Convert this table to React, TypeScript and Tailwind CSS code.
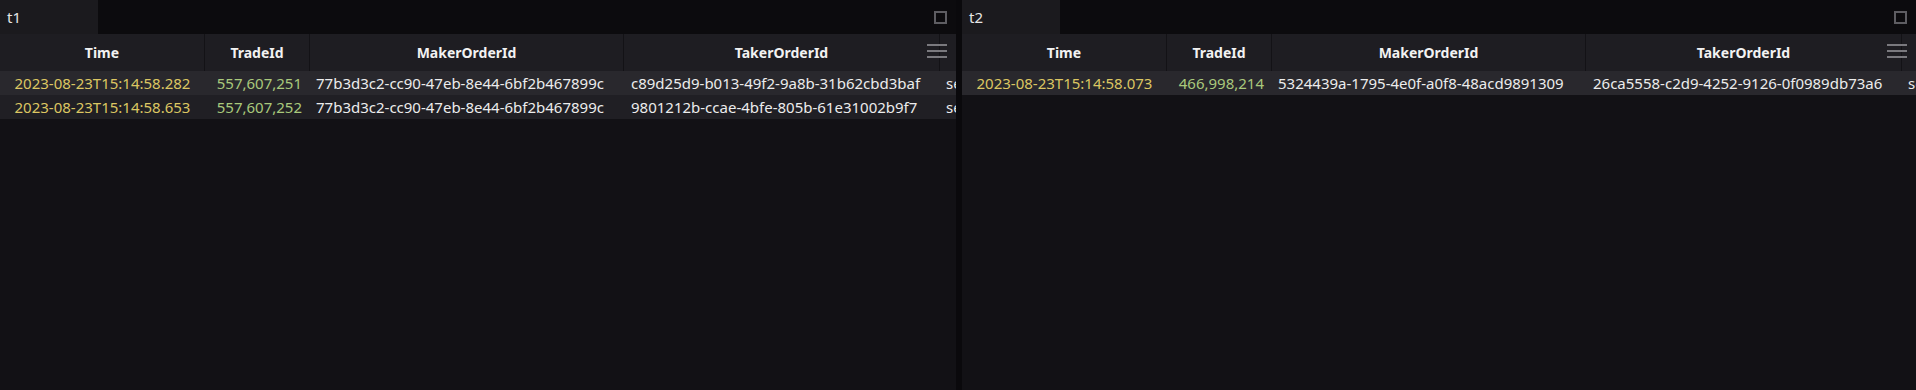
import React from 'react';

interface Trade {
  time: string;
  tradeId: string;
  maker: string;
  taker: string;
  side: string;
}

const cols = [
  { name: 'Time', w: 'w-[205px]' },
  { name: 'TradeId', w: 'w-[105px]' },
  { name: 'MakerOrderId', w: 'w-[314px]' },
  { name: 'TakerOrderId', w: 'w-[316px]' },
  { name: 'Side', w: 'w-[120px]' },
];

const left: Trade[] = [
  { time: '2023-08-23T15:14:58.282', tradeId: '557,607,251', maker: '77b3d3c2-cc90-47eb-8e44-6bf2b467899c', taker: 'c89d25d9-b013-49f2-9a8b-31b62cbd3baf', side: 'sell' },
  { time: '2023-08-23T15:14:58.653', tradeId: '557,607,252', maker: '77b3d3c2-cc90-47eb-8e44-6bf2b467899c', taker: '9801212b-ccae-4bfe-805b-61e31002b9f7', side: 'sell' },
];

const right: Trade[] = [
  { time: '2023-08-23T15:14:58.073', tradeId: '466,998,214', maker: '5324439a-1795-4e0f-a0f8-48acd9891309', taker: '26ca5558-c2d9-4252-9126-0f0989db73a6', side: 'sell' },
];

const Panel: React.FC<{ title: string; rows: Trade[]; width: string }> = ({ title, rows, width }) => {
  return (
    <div className={`${width} h-full flex flex-col bg-[#121115] overflow-hidden shrink-0`}>
      <div className="h-[34px] flex items-center bg-[#0c0b0e] shrink-0">
        <div className="h-full w-[98px] bg-[#1b1a1e] flex items-center pl-[7px] text-[15px] text-[#e6e6e6]">{title}</div>
        <div className="flex-1" />
        <div className="w-[13px] h-[13px] border-2 border-[#5e5d62] mr-[9px]" />
      </div>
      <div className="relative flex-1 overflow-hidden">
        <div className="w-max">
          <div className="flex h-[37px] bg-[#1e1d22]">
            {cols.map((c, i) => (
              <div key={c.name} className={`${c.w} shrink-0 flex items-center justify-center font-bold text-[14px] text-[#f2f2f2] ${i < cols.length - 1 ? 'border-r border-[#131216]' : ''}`}>
                {i < cols.length - 1 ? c.name : ''}
              </div>
            ))}
          </div>
          {rows.map((r, i) => (
            <div key={r.tradeId} className={`flex h-[24px] items-center text-[15px] ${i % 2 === 0 ? 'bg-[#29282d]' : 'bg-[#201f24]'}`}>
              <div className="w-[205px] shrink-0 text-center text-[#dcc662]">{r.time}</div>
              <div className="w-[105px] shrink-0 text-right pr-[8px] text-[#a9c97c]">{r.tradeId}</div>
              <div className="w-[314px] shrink-0 pl-[6px] text-[#ececec]">{r.maker}</div>
              <div className="w-[316px] shrink-0 pl-[7px] text-[#ececec]">{r.taker}</div>
              <div className="w-[120px] shrink-0 pl-[6px] text-[#ececec]">{r.side}</div>
            </div>
          ))}
        </div>
        <div className="absolute top-[10px] right-[9px] w-[20px] flex flex-col gap-[4px]">
          <div className="h-[2px] bg-[#7a797e]" />
          <div className="h-[2px] bg-[#7a797e]" />
          <div className="h-[2px] bg-[#7a797e]" />
        </div>
      </div>
    </div>
  );
};

const App: React.FC = () => {
  return (
    <div className="w-[1916px] h-[390px] flex bg-[#0a090c] font-['Noto_Sans',sans-serif]">
      <Panel title="t1" rows={left} width="w-[956px]" />
      <div className="w-[6px] h-full bg-[#0a090c] shrink-0" />
      <Panel title="t2" rows={right} width="w-[954px]" />
    </div>
  );
};

export default App;
